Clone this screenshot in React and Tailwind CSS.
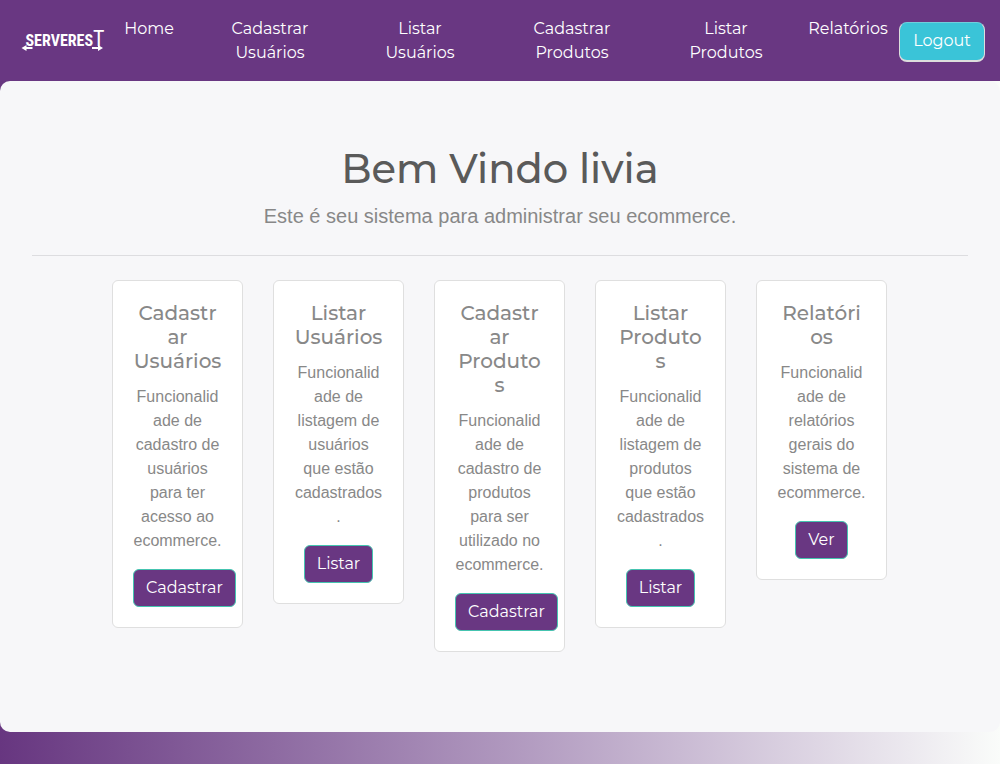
import React from "react";

const links = [
  { label: "Home", href: "#home" },
  { label: "Cadastrar Usuários", href: "#cadastrar-usuarios" },
  { label: "Listar Usuários", href: "#listar-usuarios" },
  { label: "Cadastrar Produtos", href: "#cadastrar-produtos" },
  { label: "Listar Produtos", href: "#listar-produtos" },
  { label: "Relatórios", href: "#relatorios" },
];

const cards = [
  {
    title: "Cadastrar Usuários",
    text: "Funcionalidade de cadastro de usuários para ter acesso ao ecommerce.",
    action: "Cadastrar",
    href: "#cadastrar-usuarios",
  },
  {
    title: "Listar Usuários",
    text: "Funcionalidade de listagem de usuários que estão cadastrados.",
    action: "Listar",
    href: "#listar-usuarios",
  },
  {
    title: "Cadastrar Produtos",
    text: "Funcionalidade de cadastro de produtos para ser utilizado no ecommerce.",
    action: "Cadastrar",
    href: "#cadastrar-produtos",
  },
  {
    title: "Listar Produtos",
    text: "Funcionalidade de listagem de produtos que estão cadastrados.",
    action: "Listar",
    href: "#listar-produtos",
  },
  {
    title: "Relatórios",
    text: "Funcionalidade de relatórios gerais do sistema de ecommerce.",
    action: "Ver",
    href: "#relatorios",
  },
];

function Logo() {
  return (
    <svg viewBox="0 0 86 26" className="h-[26px] w-[86px]" role="img" aria-label="ServeRest">
      <text
        x="45"
        y="20"
        textAnchor="middle"
        fill="#fff"
        fontSize="16"
        fontWeight="700"
        fontFamily="'Roboto Condensed', Roboto, sans-serif"
      >
        SERVERES<tspan fontSize="22" fontWeight="400">T</tspan>
      </text>
      <path d="M1.500 22l5-3v2h6v2h-6v2z" fill="#fff" />
      <path d="M83 22l-5-3v2h-6v2h6v2z" fill="#fff" />
    </svg>
  );
}

function Card({ title, text, action, href }) {
  return (
    <article className="min-w-0 rounded-md border border-[#dfdfdf] bg-white p-5">
      <h2 className="mb-3 text-xl leading-6 font-medium wrap-break-word font-['Montserrat','Inter',sans-serif]">
        {title}
      </h2>
      <p className="mb-4 text-base wrap-break-word">{text}</p>
      <a
        href={href}
        className="inline-block rounded-md border border-[#45c4b0] bg-[#693782] px-3 py-[6px] align-top text-base leading-6 text-white font-['Montserrat','Inter',sans-serif]"
      >
        {action}
      </a>
    </article>
  );
}

export default function App() {
  return (
    <div className="min-h-screen bg-linear-to-r from-[#673680] to-[#fafcfa] text-center font-['Liberation_Sans',Arial,sans-serif] text-[#888888]">
      <header className="flex items-start bg-[#693782] pt-[17px] pr-[15px] pb-4 pl-5">
        <a href="#home" className="mt-[9px] shrink-0">
          <Logo />
        </a>
        <nav className="mr-[3px] grid flex-1 grid-cols-[86fr_156fr_144fr_160fr_148fr_96fr] text-base leading-6 text-white font-['Montserrat','Inter',sans-serif]">
          {links.map((link) => (
            <a key={link.href} href={link.href} className="flex justify-center">
              <span className={link.label.includes(" ") ? "max-w-24" : ""}>{link.label}</span>
            </a>
          ))}
        </nav>
        <button
          type="button"
          className="mt-[5px] h-10 w-[86px] shrink-0 rounded-lg border border-b-2 border-[#dddddd] border-t-[#6fcfdc] bg-[#3ac4d8] pb-[2px] text-base leading-6 text-white font-['Montserrat','Inter',sans-serif]"
        >
          Logout
        </button>
      </header>

      <div className="bg-linear-to-r from-[#673680] to-[#fafcfa]">
        <main className="rounded-[10px] bg-[#f7f7f9] px-8 pt-16 pb-20">
          <h1 className="mb-2 text-[40px] leading-[48px] font-medium text-[#5a5a5a] font-['Montserrat','Inter',sans-serif]">
            Bem Vindo livia
          </h1>
          <p className="text-xl leading-[30px]">Este é seu sistema para administrar seu ecommerce.</p>
          <hr className="my-6 border-[#dddde0]" />
          <div className="mx-auto max-w-[776px] pr-px">
            <div className="grid grid-cols-5 items-start gap-[30px]">
              {cards.map((card) => (
                <Card key={card.href} {...card} />
              ))}
            </div>
          </div>
        </main>
      </div>
    </div>
  );
}
